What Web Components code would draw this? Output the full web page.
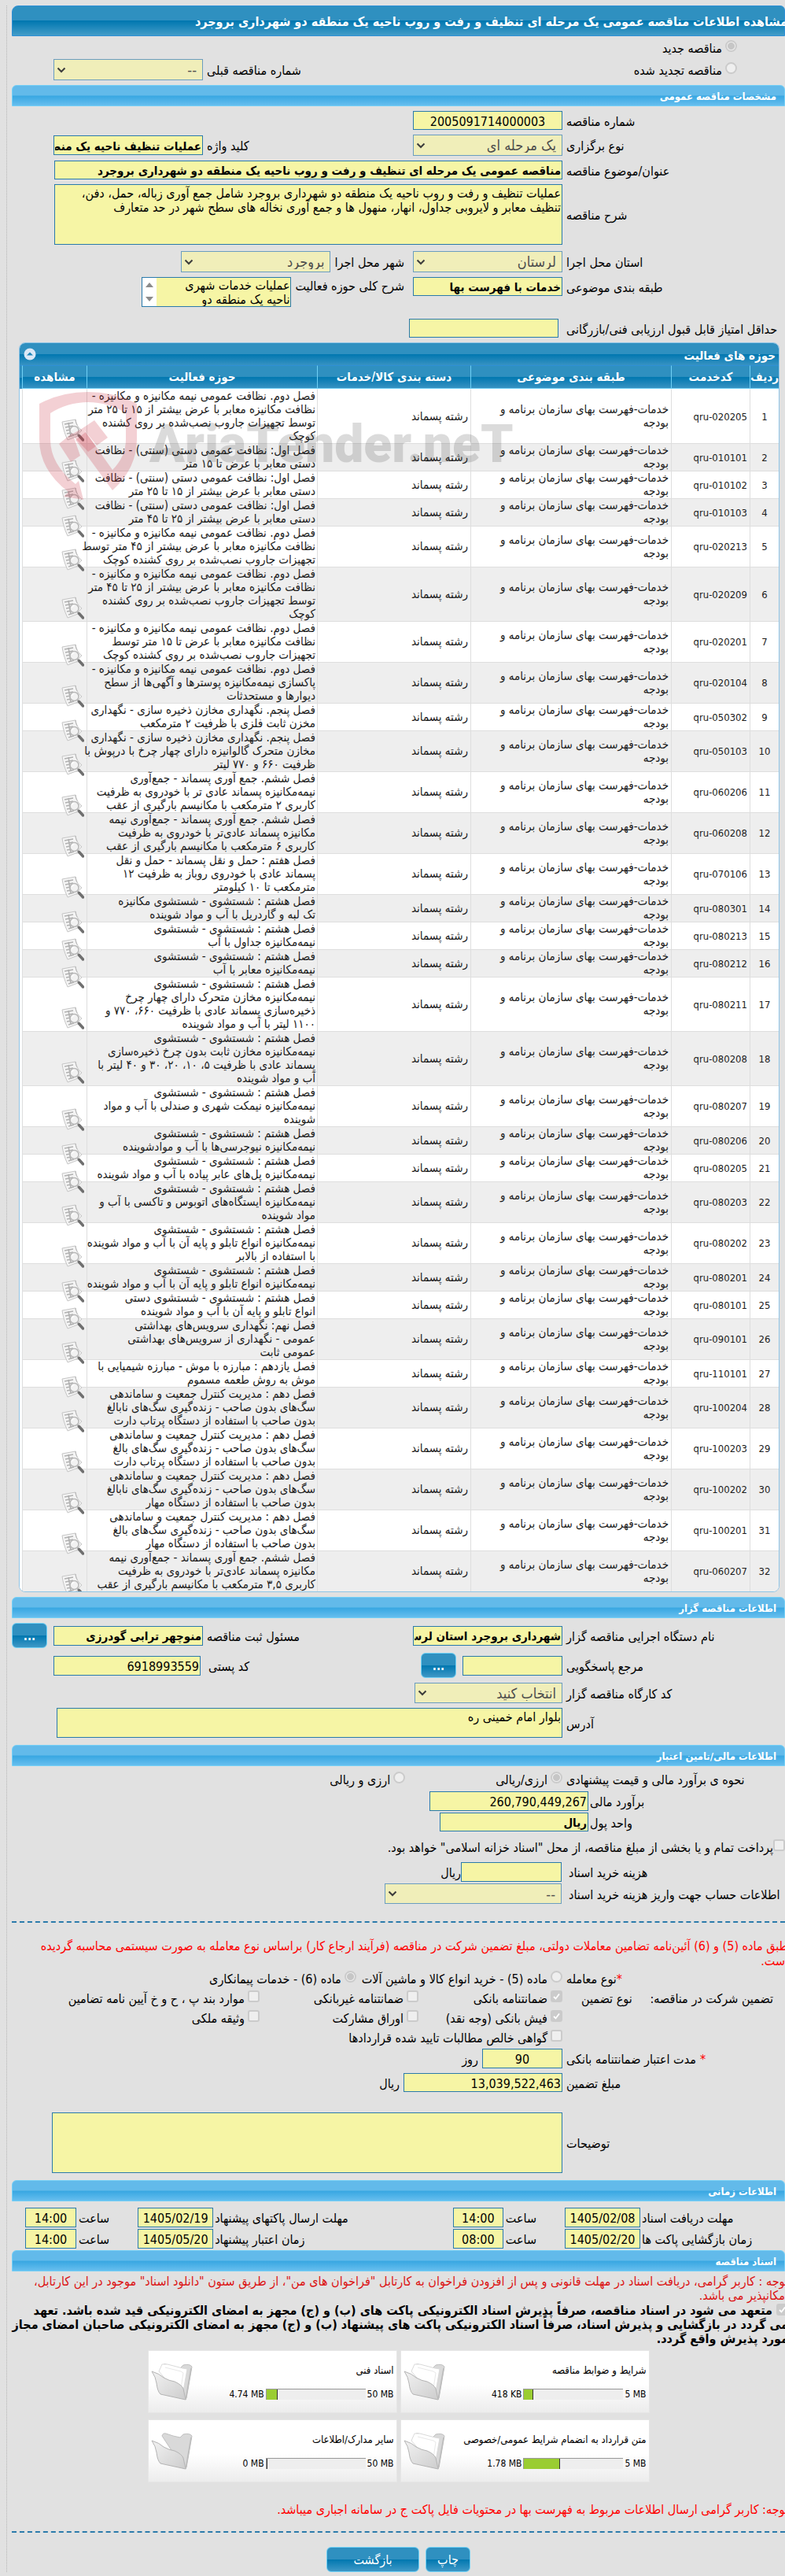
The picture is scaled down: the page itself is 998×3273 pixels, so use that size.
<!DOCTYPE html>
<html lang="fa" dir="rtl">
<head>
<meta charset="utf-8">
<title>مشاهده اطلاعات مناقصه</title>
<style>
html{background:#e1e1e1}
body{margin:0;color:#000;font:16px/18px "DejaVu Sans Condensed","DejaVu Sans",sans-serif;overflow-x:hidden}
</style>
</head>
<body>
<tender-page></tender-page>
<script>
const CONTROL = `
*{box-sizing:border-box}
:host{display:flex;align-items:center;gap:var(--gap,5px);flex:none}
label,.unit{flex:none;display:flex;justify-content:flex-end;white-space:nowrap;padding-top:3px}
.unit{margin-right:var(--unit,0px)}
input,textarea,select{margin:0;border:1px solid #2a7aab;border-radius:0;background:#f6f5a5;color:#000;font:inherit;padding:2px 1px 0;outline:0}
.star{color:red;margin-left:var(--star,0px)}`;
const esc = s => (s || '').replace(/&/g, '&amp;').replace(/"/g, '&quot;').replace(/</g, '&lt;');
const define = (name, render) => customElements.define(name, class extends HTMLElement {
  connectedCallback() {
    if (this.shadowRoot) return;
    const t = document.createElement('template');
    t.innerHTML = render(this, a => this.getAttribute(a) || '');
    this.attachShadow({mode: 'open'}).append(t.content.cloneNode(true));
  }
});
const labelOf = (el, a) => a('label') ? `<label for="c" style="${a('lw') ? `width:${a('lw')}px;` : ''}${el.hasAttribute('grow') ? 'flex:1' : ''}">${el.hasAttribute('required') ? '<span class="star">*</span>' : ''}${esc(a('label'))}</label>` : '';

/* single-line text box with its label and an optional unit */
define('text-field', (el, a) => `<style>${CONTROL}
:host([grow]){flex:1}
input{width:${a('w')}px;height:${a('h') || 25}px;text-align:${a('align') || 'start'};${el.hasAttribute('bold') ? 'font-weight:700;font-size:15px' : ''}}
</style>${labelOf(el, a)}<input id="c" type="text" readonly value="${esc(a('value'))}">${a('unit') ? `<span class="unit">${a('unit')}</span>` : ''}`);

define('select-field', (el, a) => `<style>${CONTROL}
.box{position:relative;display:flex}
select{appearance:none;width:${a('w')}px;height:${a('h') || 27}px;padding:1px 7px 0;background:#f0eeb9;border-color:#6a9dbf;color:#4d4d4d;font-size:18px;opacity:1}
svg{position:absolute;left:4px;top:50%;margin-top:-4px;width:12px;height:8px;fill:none;stroke:#3c3c3c;stroke-width:2}
</style>${labelOf(el, a)}<span class="box"><select id="c" disabled><option>${a('value')}</option></select><svg viewBox="0 0 12 8"><path d="M1.500 1.500 6 6l4.500-4.500"/></svg></span>`);

define('area-field', (el, a) => `<style>${CONTROL}
.box{position:relative;display:flex}
textarea{display:block;resize:none;overflow:hidden;width:${a('w')}px;height:${a('h')}px;line-height:18px;padding:2px 1px 0}
:host([scroll]){align-items:flex-start}
:host([scroll]) textarea{padding-left:20px;padding-top:1px}
.bar{display:none}
:host([scroll]) .bar{position:absolute;left:1px;top:1px;bottom:1px;width:18px;background:#fff;display:flex;flex-direction:column;justify-content:space-between;align-items:center;padding:6px 0}
i{border:5px solid transparent}
.up{border-top:0;border-bottom:6px solid #8b8b8b}
.down{border-bottom:0;border-top:6px solid #8b8b8b}
</style>${labelOf(el, a)}<span class="box"><textarea id="c" readonly>${esc(a('value'))}</textarea><span class="bar"><i class="up"></i><i class="down"></i></span></span>`);

/* radio button or tick box with its caption */
define('choice-field', (el, a) => `<style>
:host{display:flex;align-items:center;gap:var(--gap,4px);white-space:nowrap}
label{padding-top:2px}
input{appearance:none;box-sizing:border-box;flex:none;width:15px;height:15px;margin:0 0 5px;border:2px solid #cbcbcb;border-radius:3px;background:#efefef}
input[type=radio]{border-radius:50%}
input[type=radio]:checked{background:radial-gradient(circle,#c6c6c6 0 4px,#efefef 5px)}
input[type=checkbox]:checked{background:#cbcbcb url('data:image/svg+xml,<svg xmlns="http://www.w3.org/2000/svg" viewBox="0 0 11 11"><path d="M2 6l2.500 2.500L9 2.500" fill="none" stroke="white" stroke-width="1.800"/></svg>')}
:host([wrap]){display:block;white-space:nowrap;font-weight:700}
:host([wrap]) input{margin:0 0 0 5px;vertical-align:-1px}
</style><input id="c" type="${a('type') || 'checkbox'}" ${el.hasAttribute('checked') ? 'checked' : ''} disabled><label for="c"><slot></slot></label>`);

define('glossy-button', (el, a) => `<style>
:host{display:flex;flex:none}
button{height:32px;width:${a('w') || 45}px;padding:2px 0 0;border:1px solid #6fd0f5;border-radius:6px;color:#fff;font:inherit;background:linear-gradient(#2f90c0 0 50%,#0077b0 50%,#3e98c6)}
:host([dots]) button{font-weight:700;font-size:15px}
</style><button type="button"><slot></slot></button>`);

define('page-title', () => `<style>
:host{display:block;box-sizing:border-box;height:39px;border:1px solid #2d8fd6;border-radius:8px 6px 0 0;background:linear-gradient(#2f90c0 0 50%,#0077b0 50%,#439cc8)}
h1{margin:0 -4px 0 0;font-size:16px;line-height:40px;color:#fff;white-space:nowrap}
</style><h1><slot></slot></h1>`);

define('section-bar', () => `<style>
:host{display:block;box-sizing:border-box;height:27px;border:1px solid #73cff6;border-radius:6px 6px 0 0;padding-right:10px;background:linear-gradient(#62baea 0 48%,#38a7e2 52%,#66beee)}
h2{margin:0;font-size:13px;line-height:28px;color:#fff}
</style><h2><slot></slot></h2>`);

define('form-row', (el, a) => `<style>
:host{display:flex;align-items:center;margin-top:6px;padding-left:${a('left') || 0}px;gap:${a('gap') || 11}px}
:host([tight]){margin-top:2px}
:host([loose]){margin-top:8px}
:host([top]){align-items:flex-start}
::slotted([end]){margin-right:auto}
</style><slot></slot>`);

define('dashed-rule', () => `<style>:host{display:block;border-top:2px dashed #2b7bab}</style>`);
define('red-note', (el, a) => `<style>:host{display:block;color:${a('color') || 'red'};margin-right:-4px}p{margin:0;line-height:var(--lh,18px);white-space:nowrap}</style><p><slot></slot></p>`);

const SUBJECT = 'خدمات-فهرست بهای سازمان برنامه و\nبودجه';
const ROWS = [
['020205','فصل دوم. نظافت عمومی نیمه مکانیزه و مکانیزه -\nنظافت مکانیزه معابر با عرض بیشتر از ۱۵ تا ۲۵ متر\nتوسط تجهیزات جاروب نصب‌شده بر روی کشنده\nکوچک'],
['010101','فصل اول: نظافت عمومی دستی (سنتی) - نظافت\nدستی معابر با عرض تا ۱۵ متر'],
['010102','فصل اول: نظافت عمومی دستی (سنتی) - نظافت\nدستی معابر با عرض بیشتر از ۱۵ تا ۲۵ متر'],
['010103','فصل اول: نظافت عمومی دستی (سنتی) - نظافت\nدستی معابر با عرض بیشتر از ۲۵ تا ۴۵ متر'],
['020213','فصل دوم. نظافت عمومی نیمه مکانیزه و مکانیزه -\nنظافت مکانیزه معابر با عرض بیشتر از ۴۵ متر توسط\nتجهیزات جاروب نصب‌شده بر روی کشنده کوچک'],
['020209','فصل دوم. نظافت عمومی نیمه مکانیزه و مکانیزه -\nنظافت مکانیزه معابر با عرض بیشتر از ۲۵ تا ۴۵ متر\nتوسط تجهیزات جاروب نصب‌شده بر روی کشنده\nکوچک'],
['020201','فصل دوم. نظافت عمومی نیمه مکانیزه و مکانیزه -\nنظافت مکانیزه معابر با عرض تا ۱۵ متر توسط\nتجهیزات جاروب نصب‌شده بر روی کشنده کوچک'],
['020104','فصل دوم. نظافت عمومی نیمه مکانیزه و مکانیزه -\nپاکسازی نیمه‌مکانیزه پوسترها و آگهی‌ها از سطح\nدیوارها و مستحدثات'],
['050302','فصل پنجم. نگهداری مخازن ذخیره سازی - نگهداری\nمخزن ثابت فلزی با ظرفیت ۲ مترمکعب'],
['050103','فصل پنجم. نگهداری مخازن ذخیره سازی - نگهداری\nمخازن متحرک گالوانیزه دارای چهار چرخ با درپوش با\nظرفیت ۶۶۰ و ۷۷۰ لیتر'],
['060206','فصل ششم. جمع آوری پسماند - جمع‌آوری\nنیمه‌مکانیزه پسماند عادی تر با خودروی به ظرفیت\nکاربری ۲ مترمکعب با مکانیسم بارگیری از عقب'],
['060208','فصل ششم. جمع آوری پسماند - جمع‌آوری نیمه\nمکانیزه پسماند عادی‌تر با خودروی به ظرفیت\nکاربری ۶ مترمکعب با مکانیسم بارگیری از عقب'],
['070106','فصل هفتم : حمل و نقل پسماند - حمل و نقل\nپسماند عادی با خودروی روباز به ظرفیت ۱۲\nمترمکعب تا ۱۰ کیلومتر'],
['080301','فصل هشتم : شستشوی - شستشوی مکانیزه\nتک لبه و گاردریل با آب و مواد شوینده'],
['080213','فصل هشتم : شستشوی - شستشوی\nنیمه‌مکانیزه جداول با آب'],
['080212','فصل هشتم : شستشوی - شستشوی\nنیمه‌مکانیزه معابر با آب'],
['080211','فصل هشتم : شستشوی - شستشوی\nنیمه‌مکانیزه مخازن متحرک دارای چهار چرخ\nذخیره‌سازی پسماند عادی با ظرفیت ۶۶۰، ۷۷۰ و\n۱۱۰۰ لیتر با آب و مواد شوینده'],
['080208','فصل هشتم : شستشوی - شستشوی\nنیمه‌مکانیزه مخازن ثابت بدون چرخ ذخیره‌سازی\nپسماند عادی با ظرفیت ۵، ۱۰، ۲۰، ۳۰ و ۴۰ لیتر با\nآب و مواد شوینده'],
['080207','فصل هشتم : شستشوی - شستشوی\nنیمه‌مکانیزه نیمکت شهری و صندلی با آب و مواد\nشوینده'],
['080206','فصل هشتم : شستشوی - شستشوی\nنیمه‌مکانیزه نیوجرسی‌ها با آب و موادشوینده'],
['080205','فصل هشتم : شستشوی - شستشوی\nنیمه‌مکانیزه پل‌های عابر پیاده با آب و مواد شوینده'],
['080203','فصل هشتم : شستشوی - شستشوی\nنیمه‌مکانیزه ایستگاه‌های اتوبوس و تاکسی با آب و\nمواد شوینده'],
['080202','فصل هشتم : شستشوی - شستشوی\nنیمه‌مکانیزه انواع تابلو و پایه آن با آب و مواد شوینده\nبا استفاده از بالابر'],
['080201','فصل هشتم : شستشوی - شستشوی\nنیمه‌مکانیزه انواع تابلو و پایه آن با آب و مواد شوینده'],
['080101','فصل هشتم : شستشوی - شستشوی دستی\nانواع تابلو و پایه آن با آب و مواد شوینده'],
['090101','فصل نهم: نگهداری سرویس‌های بهداشتی\nعمومی - نگهداری از سرویس‌های بهداشتی\nعمومی ثابت'],
['110101','فصل یازدهم : مبارزه با موش - مبارزه شیمیایی با\nموش به روش طعمه مسموم'],
['100204','فصل دهم : مدیریت کنترل جمعیت و ساماندهی\nسگ‌های بدون صاحب - زنده‌گیری سگ‌های نابالغ\nبدون صاحب با استفاده از دستگاه پرتاب دارت'],
['100203','فصل دهم : مدیریت کنترل جمعیت و ساماندهی\nسگ‌های بدون صاحب - زنده‌گیری سگ‌های بالغ\nبدون صاحب با استفاده از دستگاه پرتاب دارت'],
['100202','فصل دهم : مدیریت کنترل جمعیت و ساماندهی\nسگ‌های بدون صاحب - زنده‌گیری سگ‌های نابالغ\nبدون صاحب با استفاده از دستگاه مهار'],
['100201','فصل دهم : مدیریت کنترل جمعیت و ساماندهی\nسگ‌های بدون صاحب - زنده‌گیری سگ‌های بالغ\nبدون صاحب با استفاده از دستگاه مهار'],
['060207','فصل ششم. جمع آوری پسماند - جمع‌آوری نیمه\nمکانیزه پسماند عادی‌تر با خودروی به ظرفیت\nکاربری ۳,۵ مترمکعب با مکانیسم بارگیری از عقب']];

define('view-icon', () => `<style>:host{display:block;width:29px;height:29px}svg{display:block}</style>
<svg width="29" height="29" viewBox="0 0 29 29" fill="none">
<path d="M1 4 18 1c1 5 2 9 8 14-3 2-4 4-5 7L8 27C4 19 2 11 1 4z" fill="#f4f4f4" stroke="#c6c6c6"/>
<path d="M4 7l11-2M5 11l10-2M6 15l6-1M7 19l5-1M9 23l7-2M9 5l3 17" stroke="#b0b0b0" stroke-width="1.500"/>
<path d="M18 1c0 3 1 5 2 7" stroke="#b5b5b5"/>
<circle cx="16.500" cy="15" r="5.500" fill="#f2f2f2" fill-opacity=".9" stroke="#b8b8b8" stroke-width="1.500"/>
<path d="M13.500 14a3 3 0 0 1 3-2.500" stroke="#fff" stroke-width="1.500"/>
<path d="M20.500 19.500 23 22" stroke="#a5a5a5" stroke-width="2"/><path d="M22.500 21.500 27.500 27" stroke="#6f6f6f" stroke-width="3.500" stroke-linecap="round"/>
</svg>`);

define('site-watermark', () => `<style>
:host{position:absolute;left:25px;top:62px;display:flex;align-items:center;direction:ltr;gap:16px;pointer-events:none}
span{font:900 66px/80px Roboto,"Liberation Sans",sans-serif;color:#323232;opacity:.17;margin-top:-4px}
svg{display:block;flex:none}
</style><svg width="124" height="138" viewBox="0 0 124 138" fill="#c8283c" fill-opacity=".22">
<path d="M0 15Q28 0 62 0t62 15V60Q124 97 93 125L46 61 59 51 93 99Q110 82 110 60V27Q88 13 62 13T14 27V60Q14 92 46 117L50 113 56 137 31 133 37 127Q0 99 0 60z"/>
<path d="M25 66 42 52 52 81 40 89zM41 54 55 46 72 69 62 76zM55 46 70 36 87 58 73 68z"/>
</svg><span>AriaTender.neT</span>`);

define('activity-table', () => `<style>
:host{display:block;position:relative;margin:6px 7px 0 9px;border:1px solid #8fc4e6;border-radius:8px;overflow:hidden;background:#fff}
header{display:flex;align-items:center;justify-content:space-between;box-sizing:border-box;height:28px;padding:0 4px 0 5px;color:#fff;background:linear-gradient(#2f90c0 0 50%,#0077b0 50%,#3792c2)}
h3{margin:0;padding-top:3px;font-size:15px}
button{display:flex;border:0;padding:0;background:none}
table{width:100%;border-spacing:0;table-layout:fixed;font-size:15px;line-height:17px}
th{height:30px;box-sizing:border-box;padding:0;color:#fff;border-top:1px solid #2d8fd6;border-bottom:1px solid #6fd0f5;border-left:1px solid #6fd0f5;background:linear-gradient(#2f90c0 0 48%,#0077b0 50%,#3792c2)}
td{padding:0 3px 0 0;border-top:1px solid #dedede;border-left:1px solid #dedede;color:#1c1c1c;white-space:pre}
tr:nth-child(even) td{background:#eee}
tbody tr:first-child td{border-top-color:#fff}
.n{font-size:13px;text-align:center;padding:0}
.k{font-size:13px}
.v{padding-right:2px}
tbody tr .g{background:#fff;border:0;padding:0}
thead .g{border-bottom:0;border-left:0;background:linear-gradient(#2f90c0 0 50%,#0077b0 50%,#3792c2)}
</style>
<header><h3>حوزه های فعالیت</h3><button type="button" aria-label="بستن"><svg width="16" height="16" viewBox="0 0 16 16"><circle cx="8" cy="8" r="7.500" fill="#dbe8f6"/><path d="M4 9.500 8 5.500l4 4z" fill="#1f85b8"/></svg></button></header>
<table><colgroup><col style="width:37px"><col style="width:100px"><col><col style="width:195px"><col style="width:293px"><col style="width:82px"><col style="width:3px"></colgroup>
<thead><tr><th>ردیف</th><th>کدخدمت</th><th>طبقه بندی موضوعی</th><th>دسته بندی کالا/خدمات</th><th>حوزه فعالیت</th><th>مشاهده</th><th class="g"></th></tr></thead>
<tbody>${ROWS.map(([c, t], i) => `<tr><td class="n">${i + 1}</td><td class="k"><bdi dir="ltr">qru-${c}</bdi></td><td>${SUBJECT}</td><td>رشته پسماند</td><td class="v">${t}</td><td><view-icon></view-icon></td><td class="g"></td></tr>`).join('')}</tbody></table>
<site-watermark></site-watermark>`);

/* folder card with its used-space meter */
define('doc-card', (el, a) => `<style>
*{box-sizing:border-box}
:host{box-sizing:border-box;display:flex;width:317px;height:80px;border:1px solid #e6e6e6;background:linear-gradient(#fff 55%,#ececec);font-size:13px;padding:0 3px}
.info{flex:1;display:flex;flex-direction:column;padding-top:16px;gap:12px}
.m{display:flex;align-items:center;gap:2px;height:18px;direction:ltr;justify-content:flex-end;font-size:12px}
.track{width:127px;height:14px;border-top:1px solid #999;border-left:1px solid #999;background:#eee}
.fill{height:100%;background:#9acd32;border-right:1px solid #333}
svg{align-self:center;flex:none}
.t{white-space:nowrap;width:0}
</style><div class="info"><div class="t"><slot></slot></div><div class="m"><span>${a('used')}</span><div class="track"><div class="fill" style="width:${a('fill')}px"></div></div><span>${a('max')}</span></div></div>
<svg width="54" height="50" viewBox="0 0 54 50"><defs><linearGradient id="g" x1="0" y1="0" x2="1" y2="1"><stop offset="0" stop-color="#f2f2f2"/><stop offset="1" stop-color="#cdcdcd"/></linearGradient></defs>
<path d="M14 6q1-4 5-3l9 3 9 2 4-4q8-2 11 2l-7 40-6-2z" fill="#d9d9d9" stroke="#c0c0c0"/>
${el.hasAttribute('empty') ? '' : '<path d="M10 12 14 3l7 0 19 5 6 1-6 34-25-25z" fill="#fff" stroke="#dadada"/><path d="M18 7l20 5 3 2-4 26" fill="none" stroke="#e8e8e8"/>'}
<path d="M1 12q10 3 15 8 7 4 14 5 9 4 11 9l3 14L12 41q-4-4-5-14-1-8-6-15z" fill="url(#g)" stroke="#b4b4b4"/><path d="M44 48 51 8" stroke="#bdbdbd" stroke-width="1.500"/></svg>`);

define('tender-page', () => `<style>
:host{display:block;overflow:hidden;padding:7px 0 6px 8px}
main{border-left:1px dotted #b5b5b5;padding-left:6px}
.switch{display:flex;align-items:center;height:27px;padding:1px 61px 0 53px}
.switch+.switch{margin-top:1px;padding-top:0}
.switch [end]{margin-right:auto}
section-bar{margin-top:6px}
.far{margin-top:9px}
.close{margin-top:2px}
.score{margin-top:15px;--gap:10px}
.need{width:278px;display:flex;justify-content:space-between;box-sizing:border-box;padding:2px 15px 0 19px}
.grid{display:grid;grid-template-columns:283px 183px 202px 1fr;grid-auto-rows:25px;align-items:center}
.grid .span{grid-column:2/4}
.kind{display:flex;align-items:center;height:25px;gap:7px}
.kind b{font-weight:400;width:278px;text-align:left;margin-left:-2px;padding-top:2px}
.method{margin-top:4px;padding-bottom:1px}
.second{margin-right:108px}
.treasury{height:23px;--gap:0px}
.fee{--gap:9px;--unit:-9px}
.money{--gap:2px}
.account{--gap:9px}
.post{--gap:10px}
.time{--gap:3px}
.later{margin-right:-36px}
.valid{--star:5px}
.star{color:red}
.rule1{margin-top:22px}
.n1{margin-top:20px;--lh:19px}
.area2{margin-top:26px}
.n2{margin-top:4px}
.pledge{line-height:18px;margin:1px -4px 0 0}
.cards{display:flex;flex-wrap:wrap;justify-content:center;gap:8px 4px;margin:5px auto 0;max-width:640px}
.n3{margin-top:26px}
.rule2{margin-top:18px}
.actions{display:flex;justify-content:center;gap:8px;margin-top:18px}
</style><main>
<page-title>مشاهده اطلاعات مناقصه عمومی یک مرحله ای تنظیف و رفت و روب ناحیه یک منطقه دو شهرداری بروجرد</page-title>
<div class="switch"><choice-field type="radio" checked>مناقصه جدید</choice-field></div>
<div class="switch"><choice-field type="radio">مناقصه تجدید شده</choice-field><select-field end label="شماره مناقصه قبلی" w="190" value="--"></select-field></div>
<section-bar>مشخصات مناقصه عمومی</section-bar>
<form-row><text-field label="شماره مناقصه" lw="278" w="190" h="24" align="center" value="2005091714000003"></text-field></form-row>
<form-row left="53"><select-field label="نوع برگزاری" lw="278" w="190" value="یک مرحله ای"></select-field><text-field end bold label="کلید واژه" w="190" value="عملیات تنظیف ناحیه یک منطقه دو"></text-field></form-row>
<form-row><text-field bold label="عنوان/موضوع مناقصه" lw="278" w="646" h="24" value="مناقصه عمومی یک مرحله ای تنظیف و رفت و روب ناحیه یک منطقه دو شهرداری بروجرد"></text-field></form-row>
<form-row><area-field label="شرح مناقصه" lw="278" w="646" h="77" value="عملیات تنظیف و رفت و روب ناحیه یک منطقه دو شهرداری بروجرد شامل جمع آوری زباله، حمل، دفن، تنظیف معابر و لایروبی جداول، انهار، منهول ها و جمع آوری نخاله های سطح شهر در حد متعارف"></area-field></form-row>
<form-row loose><select-field label="استان محل اجرا" lw="278" w="190" value="لرستان"></select-field><select-field label="شهر محل اجرا" w="190" value="بروجرد"></select-field></form-row>
<form-row top><text-field bold label="طبقه بندی موضوعی" lw="278" w="190" h="24" value="خدمات با فهرست بها"></text-field><area-field scroll label="شرح کلی حوزه فعالیت" w="190" h="38" value="عملیات خدمات شهری&#10;ناحیه یک منطقه دو"></area-field></form-row>
<form-row class="score"><text-field label="حداقل امتیاز قابل قبول ارزیابی فنی/بازرگانی" lw="278" w="190" h="24"></text-field></form-row>
<activity-table></activity-table>
<section-bar>اطلاعات مناقصه گزار</section-bar>
<form-row gap="8"><text-field bold label="نام دستگاه اجرایی مناقصه گزار" lw="278" w="190" value="شهرداری بروجرد استان لرستان"></text-field><text-field end bold label="مسئول ثبت مناقصه" w="190" value="منوچهر ترابی گودرزی"></text-field><glossy-button dots>...</glossy-button></form-row>
<form-row gap="8" left="53"><text-field label="مرجع پاسخگویی" lw="278" w="127"></text-field><glossy-button dots>...</glossy-button><text-field end class="post" label="کد پستی" w="187" value="6918993559"></text-field></form-row>
<form-row><select-field label="کد کارگاه مناقصه گزار" lw="278" w="188" h="26" value="انتخاب کنید"></select-field></form-row>
<form-row><area-field label="آدرس" lw="278" w="643" h="38" value="بلوار امام خمینی ره"></area-field></form-row>
<section-bar class="far">اطلاعات مالی/تامین اعتبار</section-bar>
<div class="kind method"><b>نحوه ی برآورد مالی و قیمت پیشنهادی</b><choice-field type="radio" checked>ارزی/ریالی</choice-field><choice-field type="radio" class="second">ارزی و ریالی</choice-field></div>
<form-row tight class="money"><text-field label="برآورد مالی" lw="248" w="202" value="260,790,449,267"></text-field></form-row>
<form-row tight class="money"><text-field bold label="واحد پول" lw="248" w="189" h="24" value="ریال"></text-field></form-row>
<form-row loose><choice-field class="treasury">پرداخت تمام و یا بخشی از مبلغ مناقصه، از محل "اسناد خزانه اسلامی" خواهد بود.</choice-field></form-row>
<form-row loose><text-field class="fee" label="هزینه خرید اسناد" lw="275" w="128" unit="ریال"></text-field></form-row>
<form-row tight><select-field class="account" label="اطلاعات حساب جهت واریز هزینه خرید اسناد" lw="275" w="225" h="26" value="--"></select-field></form-row>
<dashed-rule class="rule1"></dashed-rule>
<red-note class="n1">طبق ماده (5) و (6) آئین‌نامه تضامین معاملات دولتی، مبلغ تضمین شرکت در مناقصه (فرآیند ارجاع کار) براساس نوع معامله به صورت سیستمی محاسبه گردیده<br>است.</red-note>
<div class="kind"><b><span class="star">*</span>نوع معامله</b><choice-field type="radio">ماده (5) - خرید انواع کالا و ماشین آلات</choice-field><choice-field type="radio" checked>ماده (6) - خدمات پیمانکاری</choice-field></div>
<div class="grid">
<div class="need"><span>تضمین شرکت در مناقصه:</span><span>نوع تضمین</span></div><choice-field checked>ضمانتنامه بانکی</choice-field><choice-field>ضمانتنامه غیربانکی</choice-field><choice-field>موارد بند پ ، ح و خ آیین نامه تضامین</choice-field>
<span></span><choice-field checked>فیش بانکی (وجه نقد)</choice-field><choice-field>اوراق مشارکت</choice-field><choice-field>وثیقه ملکی</choice-field>
<span></span><choice-field class="span">گواهی خالص مطالبات تایید شده قراردادها</choice-field>
</div>
<form-row tight><text-field required class="valid" label="مدت اعتبار ضمانتنامه بانکی" lw="278" w="102" align="center" value="90" unit="روز"></text-field></form-row>
<form-row><text-field label="مبلغ تضمین" lw="278" w="202" h="24" value="13,039,522,463" unit="ریال"></text-field></form-row>
<form-row class="area2"><area-field label="توضیحات" lw="278" w="649" h="77"></area-field></form-row>
<section-bar class="far">اطلاعات زمانی</section-bar>
<form-row loose left="17" gap="36"><text-field class="money" label="مهلت دریافت اسناد" lw="182" w="96" align="center" value="1405/02/08"></text-field><text-field class="time" label="ساعت" w="64" align="center" value="14:00"></text-field><text-field grow class="money later" label="مهلت ارسال پاکتهای پیشنهاد" w="96" align="center" value="1405/02/19"></text-field><text-field class="time" label="ساعت" w="65" align="center" value="14:00"></text-field></form-row>
<form-row tight left="17" gap="36"><text-field class="money" label="زمان بازگشایی پاکت ها" lw="182" w="96" align="center" value="1405/02/20"></text-field><text-field class="time" label="ساعت" w="64" align="center" value="08:00"></text-field><text-field grow class="money later" label="زمان اعتبار پیشنهاد" w="96" align="center" value="1405/05/20"></text-field><text-field class="time" label="ساعت" w="65" align="center" value="14:00"></text-field></form-row>
<section-bar class="close">اسناد مناقصه</section-bar>
<red-note class="n2" color="#dc1414">توجه : کاربر گرامی، دریافت اسناد در مهلت قانونی و پس از افزودن فراخوان به کارتابل "فراخوان های من"، از طریق ستون "دانلود اسناد" موجود در این کارتابل،<br>امکانپذیر می باشد.</red-note>
<choice-field class="pledge" wrap checked>متعهد می شود در اسناد مناقصه، صرفاً پذیرش اسناد الکترونیکی پاکت های (ب) و (ج) مجهز به امضای الکترونیکی قید شده باشد. تعهد<br>می گردد در بازگشایی و پذیرش اسناد، صرفاً اسناد الکترونیکی پاکت های پیشنهاد (ب) و (ج) مجهز به امضای الکترونیکی صاحبان امضای مجاز<br>مورد پذیرش واقع گردد.</choice-field>
<div class="cards">
<doc-card used="418 KB" max="5 MB" fill="12">شرایط و ضوابط مناقصه</doc-card><doc-card used="4.74 MB" max="50 MB" fill="14">اسناد فنی</doc-card>
<doc-card used="1.78 MB" max="5 MB" fill="46">متن قرارداد به انضمام شرایط عمومی/خصوصی</doc-card><doc-card empty used="0 MB" max="50 MB" fill="1">سایر مدارک/اطلاعات</doc-card>
</div>
<red-note class="n3">توجه: کاربر گرامی ارسال اطلاعات مربوط به فهرست بها در محتویات فایل پاکت ج در سامانه اجباری میباشد.</red-note>
<dashed-rule class="rule2"></dashed-rule>
<div class="actions"><glossy-button w="57">چاپ</glossy-button><glossy-button w="118">بازگشت</glossy-button></div>
</main>`);
</script>
</body>
</html>
